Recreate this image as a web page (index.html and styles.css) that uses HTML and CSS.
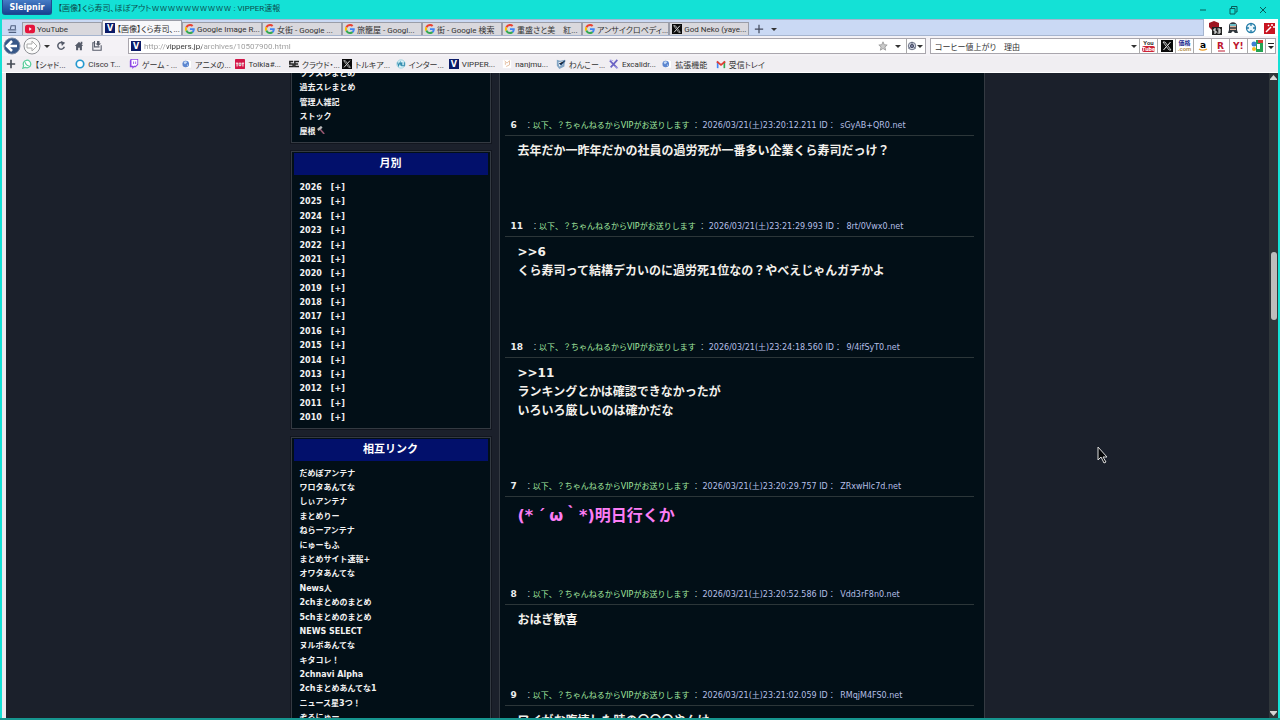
FILE: index.html
```html
<!DOCTYPE html>
<html lang="ja">
<head>
  <meta charset="UTF-8">
  <meta name="viewport" content="width=device-width, initial-scale=1">
  <title>【画像】くら寿司、ほぼアウトｗｗｗｗｗｗｗｗｗｗ : VIPPER速報</title>
  <link rel="stylesheet" href="styles.css">
</head>
<body>
  <svg class="defs" aria-hidden="true">
    <symbol id="google" viewBox="0 0 48 48">
      <path fill="#ea4335" d="M24 9.500c3.500 0 6.700 1.200 9.200 3.600l6.900-6.900C35.900 2.400 30.500 0 24 0 14.600 0 6.500 5.400 2.600 13.200l8 6.200C12.400 13.700 17.700 9.500 24 9.500z"/>
      <path fill="#4285f4" d="M47 24.500c0-1.600-.2-3.100-.4-4.500H24v9h12.900c-.6 3-2.300 5.500-4.800 7.200l7.700 6C44.400 38 47 31.800 47 24.500z"/>
      <path fill="#fbbc05" d="M10.500 28.600a14.500 14.500 0 0 1 0-9.200l-8-6.200a24 24 0 0 0 0 21.600z"/>
      <path fill="#34a853" d="M24 48c6.500 0 11.900-2.100 15.900-5.800l-7.700-6c-2.200 1.500-4.900 2.300-8.200 2.300-6.300 0-11.600-4.200-13.500-9.900l-8 6.200C6.500 42.600 14.600 48 24 48z"/>
    </symbol>
    <symbol id="x" viewBox="0 0 24 24">
      <path fill="#0a0a0a" d="M0 0h24v24H0z"/>
      <path fill="none" stroke="#fff" stroke-width="1.500" d="M4 4h4l12 16h-4z"/>
      <path stroke="#fff" stroke-width="2" d="M19 4l-6 7M11 13l-6 7"/>
    </symbol>
    <symbol id="globe" viewBox="0 0 24 24">
      <path fill="#fff" stroke="#ddd" d="M9 2h10l4 4v16H9z"/>
      <circle cx="9" cy="12" r="8" fill="#5c86cf"/>
      <path fill="#c6dcf7" d="M4 8c3-4 7-3 8-1s-3 3-4 5-3-1-4-4zM12 13l3 1-3 4z"/>
    </symbol>
  </svg>

  <div class="window">
    <header class="titlebar">
      <button class="menu">Sleipnir</button>
      <h1 class="title">【画像】くら寿司、ほぼアウトｗｗｗｗｗｗｗｗｗｗ : VIPPER速報</h1>
      <div class="window-buttons">
        <button aria-label="最小化"><svg viewBox="0 0 10 10"><path d="M2 5h6"/></svg></button>
        <button aria-label="元に戻す"><svg viewBox="0 0 10 10"><path d="M2 3.500h5V9H2zM3.500 3V1.500H9V7H7.500"/></svg></button>
        <button aria-label="閉じる"><svg viewBox="0 0 10 10"><path d="M2 2l6 6M8 2L2 8"/></svg></button>
      </div>
    </header>

    <div class="tabrow">
      <nav class="tabs" aria-label="タブ">
        <button class="tab-list" aria-label="タブ一覧"><svg class="icon" viewBox="0 0 12 12"><path fill="none" stroke="#50607f" stroke-width="1.300" d="M4 6l1-4h5v4M1 7h10M2 10h9"/></svg></button>
        <button class="tab"><svg class="icon" viewBox="0 0 12 12"><rect y="1" width="12" height="10" rx="3" fill="#e5143c"/><path fill="#fff" d="M5 4l3 2-3 2z"/></svg><span>YouTube</span></button>
        <button class="tab active"><b class="vlogo">V</b><span>【画像】くら寿司、...</span></button>
        <button class="tab"><svg class="icon"><use href="#google"/></svg><span>Google Image R...</span></button>
        <button class="tab"><svg class="icon"><use href="#google"/></svg><span>女街 - Google ...</span></button>
        <button class="tab"><svg class="icon"><use href="#google"/></svg><span>旅籠屋 - Googl...</span></button>
        <button class="tab"><svg class="icon"><use href="#google"/></svg><span>街 - Google 検索</span></button>
        <button class="tab"><svg class="icon"><use href="#google"/></svg><span>重盛さと美　紅...</span></button>
        <button class="tab"><svg class="icon"><use href="#google"/></svg><span>アンサイクロペディ...</span></button>
        <button class="tab"><svg class="icon"><use href="#x"/></svg><span>God Neko (yaye...</span></button>
        <button class="new-tab" aria-label="新しいタブ"><svg class="icon" viewBox="0 0 12 12"><path stroke="#444b5e" stroke-width="1.500" d="M6 1v10M1 6h10"/></svg></button>
        <button class="arrow" aria-label="閉じたタブ"></button>
      </nav>
      <div class="extensions">
        <button aria-label="ブロッカー"><svg viewBox="0 0 14 14"><path fill="#9e1420" d="M1 2l5-2 5 2v5l-5 4-5-5z"/><rect x="4" y="6" width="10" height="8" fill="#222"/><path fill="none" stroke="#fff" d="M8 8H6v2h2v2H6M9.500 8H12v4H9.500M10 10h2"/></svg></button>
        <button aria-label="ユーザー"><svg viewBox="0 0 14 14"><path fill="#30363d" d="M3 5c0-5 8-5 8 0v4l1 3H9L7 10l-2 2H2l1-3z"/><path fill="#dcae98" d="M4 5h6v4H4z"/><path fill="#6bbcc7" d="M4 3h6v2H4z"/><path stroke="#30363d" stroke-width="1.500" d="M3 7h8"/></svg></button>
        <button aria-label="コンパス"><svg viewBox="0 0 14 14"><circle cx="7" cy="7" r="4.500" fill="#e8f5fa" stroke="#247da8" stroke-width="1.300"/><path stroke="#247da8" stroke-width="1.300" d="M7 2v3M7 9v3M2 7h3M9 7h3"/></svg></button>
        <button aria-label="ワンド"><svg viewBox="0 0 14 14"><path fill="#c81420" d="M2 2h11v11H2z"/><path stroke="#fff" stroke-width="1.500" d="M4 11l5-5M10 3v2M11 6h2M6 4l1 1"/></svg></button>
      </div>
    </div>

    <div class="toolbar">
      <button class="nav-button" aria-label="戻る"><svg viewBox="0 0 18 18"><circle cx="9" cy="9" r="8" fill="#365788" stroke="#7d8da7"/><path fill="none" stroke="#fff" stroke-width="2.500" d="M14 9H5M9 4L4 9l5 5"/></svg></button>
      <button class="nav-button" aria-label="進む"><svg viewBox="0 0 18 18"><circle cx="9" cy="9" r="8" fill="#fafafa" stroke="#8e9095"/><path fill="#fff" stroke="#aaa" d="M4 7h5V4l5 5-5 5v-3H4z"/></svg></button>
      <button class="arrow" aria-label="履歴"></button>
      <button class="tool" aria-label="更新"><svg viewBox="0 0 12 12"><path fill="none" stroke="#555b69" stroke-width="1.800" d="M9 3a4 4 0 1 0 1 4"/><path fill="#555b69" d="M6 0l5 2-4 4z"/></svg></button>
      <button class="tool" aria-label="ホーム"><svg viewBox="0 0 12 12"><path fill="#555b69" d="M6 1l5 5H9.500v5H7V8H5v3H2.500V6H1zM8 1h2v3H8z"/></svg></button>
      <button class="tool" aria-label="保存"><svg viewBox="0 0 12 12"><path fill="none" stroke="#555b69" stroke-width="1.300" d="M3 2H1v9h10V5M3 0v7h6"/><path fill="#555b69" d="M6 0h3v3h2L7.500 6 4 3h2z"/></svg></button>
      <div class="address">
        <b class="vlogo">V</b>
        <input class="url" type="text" aria-label="アドレス" value="http://vippers.jp/archives/10507900.html">
        <button class="star" aria-label="ブックマーク"><svg class="icon" viewBox="0 0 12 12"><path fill="#c9c9c9" stroke="#999" d="M6 1l1.500 3.500 3.500.3-2.700 2.400.9 3.800L6 9l-3.200 2 .9-3.800L1 4.800l3.500-.3z"/></svg></button>
        <button class="arrow" aria-label="候補"></button>
        <button class="engine" aria-label="エンジン"><svg class="icon" viewBox="0 0 12 12"><circle cx="6" cy="6" r="4.500" fill="#d4d8e3" stroke="#596077"/><circle cx="6" cy="6" r="2" fill="#757b98" stroke="#3e455d"/><path stroke="#596077" d="M6 1v3M2 9l2-2M10 9L8 7"/></svg><i class="arrow"></i></button>
      </div>
      <div class="search">
        <input type="text" aria-label="検索" value="コーヒー値上がり　理由">
        <button class="arrow" aria-label="検索履歴"></button>
        <button class="site youtube" aria-label="YouTube"><small>You</small><small>Tube</small></button>
        <button class="site" aria-label="X"><svg class="icon large"><use href="#x"/></svg></button>
        <button class="site kakaku" aria-label="価格.com"><small>価格</small><small>.com</small></button>
        <button class="site" aria-label="Amazon"><svg class="icon large" viewBox="0 0 12 12"><text class="glyph" x="3" y="8">a</text><path fill="none" stroke="#ed9d28" stroke-width="1.300" d="M2 9c3 2 6 1 8 0"/></svg></button>
        <button class="site" aria-label="楽天"><svg class="icon large" viewBox="0 0 12 12"><text class="glyph red" x="2" y="9">R</text><path stroke="#be1830" d="M3 11h7"/></svg></button>
        <button class="site" aria-label="Yahoo"><svg class="icon large" viewBox="0 0 12 12"><text class="glyph red" x="0" y="9">Y!</text></svg></button>
        <button class="site" aria-label="Google マップ"><svg class="icon large" viewBox="0 0 12 12"><path fill="#24a353" d="M5 0h7v12H5z"/><path fill="#d83a35" d="M7 0h5v3H7z"/><circle cx="3" cy="4" r="2.500" fill="#3e80d5"/><circle cx="3" cy="9" r="2" fill="#f4bd26"/><path fill="#fff" d="M6 4h3v5H6z"/></svg></button>
        <button class="site more" aria-label="その他"><svg viewBox="0 0 8 12"><path fill="#222" d="M1 3h6v1H1zM1 6h6L4 9z"/></svg></button>
      </div>
    </div>

    <nav class="bookmarks" aria-label="ブックマーク">
      <button class="add" aria-label="追加"><svg class="icon" viewBox="0 0 12 12"><path stroke="#444b55" stroke-width="2" d="M6 1v10M1 6h10"/></svg></button>
      <div class="links">
        <a href="#"><svg class="icon" viewBox="0 0 12 12"><path fill="#fff" stroke="#59ce9c" stroke-width="1.500" d="M2 8a4.500 4.500 0 1 1 2 2L1 11z"/><path fill="none" stroke="#59ce9c" stroke-width="1.500" d="M4 4c0 2 2 4 4 4"/></svg><span>【シャド...</span></a>
        <a href="#"><svg class="icon" viewBox="0 0 12 12"><circle cx="6" cy="6" r="4.500" fill="#fff" stroke="#2499cf" stroke-width="2"/></svg><span>Cisco T...</span></a>
        <a href="#"><svg class="icon" viewBox="0 0 12 12"><path fill="#8b45e5" d="M2 0h9v7l-3 3H6l-2 2v-2H1V2z"/><path fill="#fff" d="M3 1h7v5L8 8H6L5 9V8H3z"/><path stroke="#8b45e5" d="M5.500 3v3M8 3v3"/></svg><span>ゲーム - ...</span></a>
        <a href="#"><svg class="icon"><use href="#globe"/></svg><span>アニメの...</span></a>
        <a href="#"><svg class="icon" viewBox="0 0 12 12"><rect width="12" height="12" rx="1" fill="#d31648"/><path stroke="#fff" stroke-width="1.200" d="M1 5h3M2.500 5v4M5 5h2v3H5zM8 5h3M9.500 5v4"/></svg><span>Tolkia#...</span></a>
        <a href="#"><svg class="icon" viewBox="0 0 12 12"><path fill="none" stroke="#222" stroke-width="1.800" d="M5 3H1v3h4v3H0M12 3H7v6h5M7 6h4"/></svg><span>クラウド・...</span></a>
        <a href="#"><svg class="icon"><use href="#x"/></svg><span>トルキア...</span></a>
        <a href="#"><svg class="icon" viewBox="0 0 12 12"><circle cx="6" cy="6" r="5" fill="#d9f2f8" stroke="#9bcfdd"/><path fill="none" stroke="#348daf" stroke-width="1.300" d="M2 4l1 4 2-4 1 4 1-4v4h3V4"/></svg><span>インター...</span></a>
        <a href="#"><b class="vlogo">V</b><span>VIPPER...</span></a>
        <a href="#"><svg class="icon" viewBox="0 0 12 12"><path fill="#fff" d="M1 1h10v10H1z"/><path fill="none" stroke="#e0b392" d="M3 2l3 3 3-3v5L5 9M4 4v3"/></svg><span>nanjmu...</span></a>
        <a href="#"><svg class="icon" viewBox="0 0 12 12"><path fill="#83a5c4" d="M1 1l4 1 6-1-1 8-6 3-3-4z"/><path fill="#fff" d="M3 4l5-1v4L4 9z"/><path stroke="#284d7c" stroke-width="1.500" d="M4 5l2 2 5-5"/></svg><span>わんこー...</span></a>
        <a href="#"><svg class="icon" viewBox="0 0 12 12"><path stroke="#6962c4" stroke-width="2" d="M1 2l9 9M10 1L2 10"/><path stroke="#a8a3ec" d="M1 1l4 1M7 9l4 2"/></svg><span>Excalidr...</span></a>
        <a href="#"><svg class="icon"><use href="#globe"/></svg><span>拡張機能</span></a>
        <a href="#"><svg class="icon" viewBox="0 0 12 12"><path fill="#4285f4" d="M1 3h2v8H1z"/><path fill="#34a853" d="M9 3h2v8H9z"/><path fill="none" stroke="#e33d32" stroke-width="2" d="M1 3l5 4 5-4"/></svg><span>受信トレイ</span></a>
      </div>
    </nav>

    <div class="viewport">
      <div class="page">
        <aside class="sidebar">
          <section class="box first">
            <ul>
              <li><a href="#">ワクスレまとめ</a></li>
              <li><a href="#">過去スレまとめ</a></li>
              <li><a href="#">管理人雑記</a></li>
              <li><a href="#">ストック</a></li>
              <li><a href="#">屋根<svg class="hammer" viewBox="0 0 10 10"><path stroke="#94566e" stroke-width="2" d="M4 4l5 6"/><path stroke="#bbb" stroke-width="3" d="M1 5l5-4"/></svg></a></li>
            </ul>
          </section>
          <section class="box">
            <h2>月別</h2>
            <ul class="years">
              <li><a href="#">2026</a> <a href="#">[+]</a></li>
              <li><a href="#">2025</a> <a href="#">[+]</a></li>
              <li><a href="#">2024</a> <a href="#">[+]</a></li>
              <li><a href="#">2023</a> <a href="#">[+]</a></li>
              <li><a href="#">2022</a> <a href="#">[+]</a></li>
              <li><a href="#">2021</a> <a href="#">[+]</a></li>
              <li><a href="#">2020</a> <a href="#">[+]</a></li>
              <li><a href="#">2019</a> <a href="#">[+]</a></li>
              <li><a href="#">2018</a> <a href="#">[+]</a></li>
              <li><a href="#">2017</a> <a href="#">[+]</a></li>
              <li><a href="#">2016</a> <a href="#">[+]</a></li>
              <li><a href="#">2015</a> <a href="#">[+]</a></li>
              <li><a href="#">2014</a> <a href="#">[+]</a></li>
              <li><a href="#">2013</a> <a href="#">[+]</a></li>
              <li><a href="#">2012</a> <a href="#">[+]</a></li>
              <li><a href="#">2011</a> <a href="#">[+]</a></li>
              <li><a href="#">2010</a> <a href="#">[+]</a></li>
            </ul>
          </section>
          <section class="box">
            <h2>相互リンク</h2>
            <ul>
              <li><a href="#">だめぽアンテナ</a></li>
              <li><a href="#">ワロタあんてな</a></li>
              <li><a href="#">しぃアンテナ</a></li>
              <li><a href="#">まとめりー</a></li>
              <li><a href="#">ねらーアンテナ</a></li>
              <li><a href="#">にゅーもふ</a></li>
              <li><a href="#">まとめサイト速報+</a></li>
              <li><a href="#">オワタあんてな</a></li>
              <li><a href="#">News人</a></li>
              <li><a href="#">2chまとめのまとめ</a></li>
              <li><a href="#">5chまとめのまとめ</a></li>
              <li><a href="#">NEWS SELECT</a></li>
              <li><a href="#">ヌルポあんてな</a></li>
              <li><a href="#">キタコレ！</a></li>
              <li><a href="#">2chnavi Alpha</a></li>
              <li><a href="#">2chまとめあんてな1</a></li>
              <li><a href="#">ニュース星3つ！</a></li>
              <li><a href="#">ぞるにゅー</a></li>
            </ul>
          </section>
        </aside>

        <main class="thread">
          <article class="post">
            <header><b>6</b>：<span class="name">以下、？ちゃんねるからVIPがお送りします</span> ： <span class="date">2026/03/21(土)23:20:12.211 ID： <span class="id">sGyAB+QR0.net</span></span></header>
            <p>去年だか一昨年だかの社員の過労死が一番多い企業くら寿司だっけ？</p>
          </article>
          <article class="post">
            <header><b>11</b>：<span class="name">以下、？ちゃんねるからVIPがお送りします</span> ： <span class="date">2026/03/21(土)23:21:29.993 ID： <span class="id">8rt/0Vwx0.net</span></span></header>
            <p>&gt;&gt;6<br>くら寿司って結構デカいのに過労死1位なの？やべえじゃんガチかよ</p>
          </article>
          <article class="post">
            <header><b>18</b>：<span class="name">以下、？ちゃんねるからVIPがお送りします</span> ： <span class="date">2026/03/21(土)23:24:18.560 ID： <span class="id">9/4ifSyT0.net</span></span></header>
            <p>&gt;&gt;11<br>ランキングとかは確認できなかったが<br>いろいろ厳しいのは確かだな</p>
          </article>
          <article class="post">
            <header><b>7</b>：<span class="name">以下、？ちゃんねるからVIPがお送りします</span> ： <span class="date">2026/03/21(土)23:20:29.757 ID： <span class="id">ZRxwHlc7d.net</span></span></header>
            <p class="pink">(*<span class="accent">´</span>ω｀*)明日行くか</p>
          </article>
          <article class="post">
            <header><b>8</b>：<span class="name">以下、？ちゃんねるからVIPがお送りします</span> ： <span class="date">2026/03/21(土)23:20:52.586 ID： <span class="id">Vdd3rF8n0.net</span></span></header>
            <p>おはぎ歓喜</p>
          </article>
          <article class="post">
            <header><b>9</b>：<span class="name">以下、？ちゃんねるからVIPがお送りします</span> ： <span class="date">2026/03/21(土)23:21:02.059 ID： <span class="id">RMqjM4FS0.net</span></span></header>
            <p>ワイがお腹壊した時の〇〇〇やんけ</p>
          </article>
        </main>
      </div>
      <div class="scrollbar" aria-hidden="true">
        <svg viewBox="0 0 9 11"><path fill="#d5d5d5" d="M1 6l3.500-4L8 6v1H1z"/></svg>
        <div class="track"><div class="thumb"></div></div>
        <svg viewBox="0 0 9 11"><path fill="#d5d5d5" d="M1 4h7v1L4.500 9 1 5z"/></svg>
      </div>
    </div>
  </div>
  <svg class="cursor" viewBox="0 0 12 19" aria-hidden="true"><path fill="#050608" stroke="#ddd" d="M1 1v13l3-3 3 6 2-1-3-5h4z"/></svg>
</body>
</html>
```
FILE: styles.css
```css
* {
  box-sizing: border-box;
}

body {
  margin: 0;
  background: #14e1d6;
  font-family: "DejaVu Sans", "Noto Sans CJK JP", sans-serif;
  font-size: 8px;
}

button {
  display: flex;
  align-items: center;
  justify-content: center;
  padding: 0;
  border: 0;
  background: none;
  font: inherit;
  color: inherit;
}

input {
  min-width: 0;
  padding: 0;
  border: 0;
  outline: 0;
  background: none;
  font: inherit;
}

a {
  color: inherit;
  text-decoration: none;
}

.defs {
  display: none;
}

.window {
  display: flex;
  flex-direction: column;
  height: 100vh;
  padding: 0 2px;
  border-bottom: 2px solid #16958f;
}

/* browser chrome */
.titlebar,
.tabrow,
.toolbar,
.bookmarks {
  display: flex;
  flex: none;
  font-family: Roboto, "Noto Sans CJK JP", sans-serif;
  font-feature-settings: "palt";
  color: #333;
}

.titlebar {
  height: 19px;
}

.menu {
  width: 50px;
  height: 15px;
  border: 1px solid #204a8f;
  border-top: 0;
  border-radius: 0 0 3px 3px;
  background: linear-gradient(#467cc6, #164290);
  color: #fff;
  font-family: "DejaVu Sans", sans-serif;
  font-weight: bold;
}

.title {
  margin: 0 0 0 6px;
  color: #0b4f4f;
  font-size: 8px;
  font-weight: normal;
  line-height: 18px;
}

.window-buttons {
  display: flex;
  margin-left: auto;
}

.window-buttons button {
  width: 30px;
}

.window-buttons svg {
  width: 10px;
  fill: none;
  stroke: #075c59;
}

.tabrow {
  height: 17px;
  background: #fff;
}

.tabs {
  display: flex;
  flex: 1;
  align-items: flex-end;
  border: 1px solid #a6b5cf;
  border-width: 1px 1px 1px 0;
  background: #cad9f4;
}

.tab-list {
  width: 20px;
  height: 13px;
}

.tab {
  flex: 0 1 80px;
  justify-content: flex-start;
  gap: 2px;
  min-width: max-content;
  height: 13px;
  padding-left: 2px;
  border: 1px solid #9a9da8;
  border-bottom: 0;
  background: #d9d8dd;
  white-space: nowrap;
}

.tab.active {
  height: 15px;
  background: #f7f7fa;
}

.icon,
.vlogo {
  flex: none;
  width: 10px;
  height: 10px;
}

.icon.large {
  width: 12px;
  height: 12px;
}

.vlogo {
  background: #0b1b68;
  color: #fff;
  font-family: "DejaVu Sans", sans-serif;
  line-height: 11px;
  text-align: center;
}

.new-tab {
  width: 20px;
  height: 13px;
}

.arrow {
  flex: none;
  width: 10px;
  height: 12px;
}

.arrow::before {
  content: "";
  border: 3px solid transparent;
  border-top-color: currentColor;
  border-bottom: 0;
}

.extensions {
  display: flex;
  gap: 4px;
  padding: 0 2px 0 4px;
}

.extensions svg {
  width: 14px;
  height: 14px;
}

.toolbar {
  align-items: center;
  height: 20px;
  background: #f4f2f6;
}

.nav-button {
  width: 20px;
}

.nav-button svg {
  width: 18px;
}

.tool {
  width: 18px;
}

.tool svg {
  width: 10px;
}

.address,
.search {
  display: flex;
  align-items: center;
  height: 16px;
  border: 1px solid #a9a6ad;
  background: #fff;
}

.address {
  flex: 1;
  gap: 3px;
  margin-left: 22px;
  padding-left: 2px;
}

/* host name is darker than the rest of the address */
.url {
  flex: 1;
  background: linear-gradient(90deg, #999 23px, #333 23px, #333 58px, #999 58px);
  background-clip: text;
  color: transparent;
}

.star {
  width: 14px;
}

.engine {
  height: 14px;
  border-left: 1px solid #aaa;
}

.engine .arrow {
  display: flex;
  align-items: center;
  width: 8px;
}

.search {
  flex: 0 1 346px;
  margin: 0 2px 0 4px;
  padding-left: 4px;
}

.search input {
  flex: 1;
  color: #333;
}

.site {
  flex: none;
  flex-direction: column;
  width: 18px;
  height: 14px;
  border-left: 1px solid #aaa;
}

.site small {
  font-size: 6px;
  font-weight: bold;
  line-height: 6px;
}

.youtube small:last-child {
  border-radius: 2px;
  background: #cc2335;
  color: #fff;
}

.kakaku {
  color: #1c2b92;
}

.kakaku small:last-child {
  color: #b89656;
}

.more {
  width: 10px;
}

.more svg {
  width: 8px;
}

.glyph {
  font-family: "DejaVu Sans", sans-serif;
  font-size: 9px;
  font-weight: bold;
}

.glyph.red {
  fill: #be1830;
}

.bookmarks {
  height: 17px;
  border-bottom: 1px solid #fff;
  background: #f0eef2;
}

.add {
  width: 16px;
  padding-left: 1px;
}

.links {
  display: grid;
  grid-template-columns: repeat(14, 1fr);
  width: 747px;
  margin-left: 4px;
}

.links a {
  display: flex;
  align-items: center;
  gap: 3px;
  white-space: nowrap;
}

/* page */
.viewport {
  display: flex;
  flex: 1;
  min-height: 0;
  border-left: 4px solid #eee9ef;
  background: #1b202b;
  overflow: hidden;
}

.page {
  display: flex;
  gap: 8px;
  width: 694px;
  height: 100%;
  margin: 0 auto;
}

.sidebar {
  flex: 0 0 200px;
  color: #f2f2f2;
}

.box {
  margin-bottom: 8px;
  padding: 1px 2px 2px;
  border: 1px solid #343a42;
  outline: 1px solid #12161f;
  background: #020f17;
}

.box.first {
  margin-top: -8px;
  padding-bottom: 3px;
}

.box h2 {
  margin: 0;
  background: #02106b;
  color: #fff;
  font-size: 11px;
  line-height: 22px;
  text-align: center;
}

.box ul {
  margin: 0;
  padding: 6px 6px 0;
  list-style: none;
  font-weight: bold;
  line-height: 1.8;
}

.box.first ul {
  padding-top: 0;
}

.years li {
  display: flex;
  gap: 9px;
}

.hammer {
  width: 8px;
  height: 8px;
  margin-left: 1px;
}

.thread {
  flex: 1;
  padding: 43px 10px 0 5px;
  border: 1px solid #343a42;
  border-width: 0 1px;
  background: #020f17;
}

.post {
  padding-bottom: 56px;
}

.post header {
  padding-left: 6px;
  border-bottom: 1px solid #2c3639;
  color: #b9c6c6;
  line-height: 19px;
  white-space: nowrap;
}

.post header b {
  margin-right: 8px;
  color: #eee;
  font-size: 9px;
}

.name {
  color: #a3e9a0;
}

.date {
  color: #b5bfe6;
}

.id {
  margin-left: 2px;
}

.post p {
  margin: 0;
  padding: 6px 0 0 13px;
  color: #f4f1ec;
  font-size: 12px;
  font-weight: bold;
  line-height: 1.6;
}

.post .pink {
  color: #fb7df5;
  font-size: 16px;
}

/* full-width cell for the kaomoji */
.accent {
  display: inline-block;
  width: 1em;
  text-align: center;
}

.scrollbar {
  display: flex;
  flex-direction: column;
  flex: 0 0 9px;
  background: #30363a;
}

.track {
  flex: 1;
  padding: 168px 1px 0 2px;
}

.thumb {
  height: 68px;
  border-radius: 3px;
  background: #bdbdbd;
}

.cursor {
  position: absolute;
  top: 446px;
  left: 1097px;
  width: 12px;
}
```
